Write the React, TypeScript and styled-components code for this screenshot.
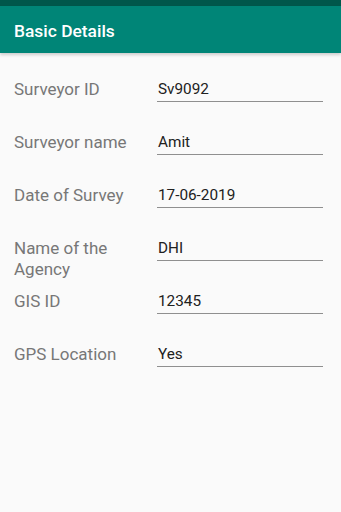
import React from "react";
import styled, { createGlobalStyle } from "styled-components";

const Global = createGlobalStyle`
  html, body { margin: 0; padding: 0; background: #fafafa; }
  body { font-family: Roboto, "Noto Sans", sans-serif; }
  #root { min-height: 512px; }
`;

const Screen = styled.div`
  width: 341px;
  min-height: 512px;
  background: #fafafa;
  display: flex;
  flex-direction: column;
`;

const StatusBar = styled.div`
  height: 6px;
  background: #00574b;
`;

const AppBar = styled.header`
  height: 47px;
  background: #008577;
  display: flex;
  align-items: center;
  padding: 0 14px;
  box-shadow: 0 2px 3px rgba(0, 0, 0, 0.18);
  position: relative;
  z-index: 1;
`;

const Title = styled.h1`
  margin: 0;
  color: #ffffff;
  font-size: 17.4px;
  font-weight: 500;
  line-height: 20px;
  padding-top: 2px;
`;

const Form = styled.div`
  display: flex;
  flex-direction: column;
  padding: 26px 0 0 14px;
`;

const Row = styled.div`
  display: grid;
  grid-template-columns: 143px 166px;
  align-items: start;
  height: 53px;
`;

const Label = styled.div`
  color: #777777;
  font-size: 17px;
  line-height: 21px;
  padding-right: 8px;
`;

const Value = styled.div`
  color: #212121;
  font-size: 15.3px;
  line-height: 21px;
  padding: 0 0 1px 1px;
  border-bottom: 1px solid #8f8f8f;
`;

const fields: [string, string][] = [
  ["Surveyor ID", "Sv9092"],
  ["Surveyor name", "Amit"],
  ["Date of Survey", "17-06-2019"],
  ["Name of the Agency", "DHI"],
  ["GIS ID", "12345"],
  ["GPS Location", "Yes"],
];

export default function App() {
  return (
    <>
      <Global />
      <Screen>
        <StatusBar />
        <AppBar>
          <Title>Basic Details</Title>
        </AppBar>
        <Form>
          {fields.map(([label, value]) => (
            <Row key={label}>
              <Label>{label}</Label>
              <Value>{value}</Value>
            </Row>
          ))}
        </Form>
      </Screen>
    </>
  );
}
